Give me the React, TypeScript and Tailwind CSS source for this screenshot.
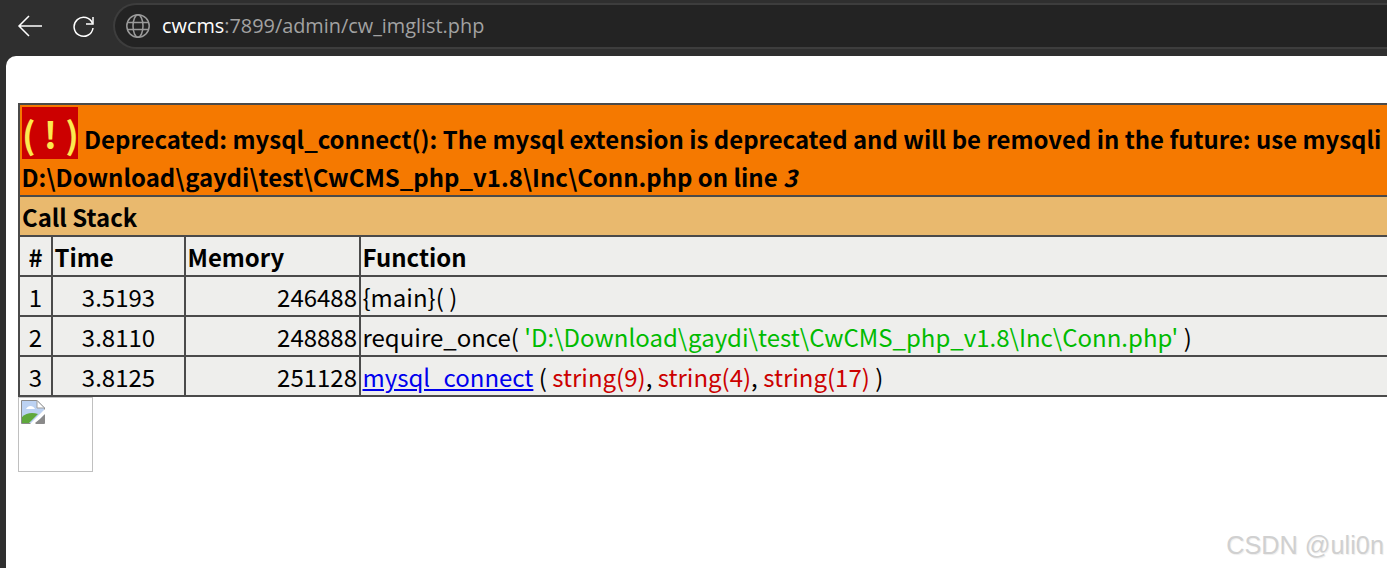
const bodyFont = "font-['Noto_Sans_CJK_SC','Noto_Sans',sans-serif]";

const cell = 'border-2 border-[#4a4a4a] bg-[#eeeeec] px-[2px] pt-[2px] h-[40px] leading-[36px] whitespace-nowrap';
const leftCell = 'border-2 border-[#4a4a4a] bg-[#eeeeec] pl-[1.5px] pr-[2px] pt-[2px] h-[40px] leading-[36px] whitespace-nowrap';

const BrokenImageIcon = () => (
  <svg width="24" height="24" viewBox="0 0 24 24" className="block">
    <path d="M0.5 0.5H16L23.5 8V23.5H0.5Z" fill="#bcd2f2" stroke="#8a8a8a" />
    <path d="M16 0.5V8H23.5Z" fill="#fff" stroke="#a0a0a0" />
    <path d="M5 9c2-4 7-4 9 0H5Z" fill="#fff" />
    <path d="M1 23v-6c4-4 10-5 16-3l-9 9Z" fill="#5fa83c" />
    <path d="M24 9L9 24h5l10-10Z" fill="#fff" />
    <path d="M19 19l4-4v8h-9Z" fill="#8a8a8a" />
  </svg>
);

const App = () => {
  return (
    <div className={`h-[568px] w-[1387px] overflow-hidden bg-[#2f2f2f] ${bodyFont}`}>
      {/* browser toolbar */}
      <div className="flex h-[56px] items-start pl-[17px] pt-[3px]">
        <svg width="26" height="26" viewBox="0 0 26 26" fill="none" stroke="#fff" strokeWidth="1.5" className="mt-[10px]">
          <path d="M25 13H2M12 3L2 13l10 10" />
        </svg>
        <svg width="24" height="24" viewBox="0 0 24 24" fill="none" stroke="#fff" strokeWidth="1.5" className="ml-[29px] mt-[11px]">
          <path d="M20.5 9.5A9.5 9.5 0 1 0 21 14" />
          <path d="M21 3v7h-7" />
        </svg>
        <div className="ml-[17px] flex h-[46px] flex-1 items-center rounded-l-[24px] border-2 border-r-0 border-[#3d3d3d] bg-[#232323] pl-[10px]">
          <svg width="26" height="26" viewBox="0 0 26 26" fill="none" stroke="#9a9a9a" strokeWidth="1.5">
            <circle cx="13" cy="13" r="11.2" />
            <ellipse cx="13" cy="13" rx="5" ry="11.2" />
            <path d="M2.5 9.5h21M2.5 16.5h21" />
          </svg>
          <span className="ml-[11px] font-['Open_Sans',sans-serif] text-[19.88px] text-[#a2a2a2]">
            <span className="text-white">cwcms</span>:7899/admin/cw_imglist.php
          </span>
        </div>
      </div>

      {/* page */}
      <div className="relative ml-[6px] h-[512px] rounded-tl-[10px] bg-white pl-[12px] pt-[47px] text-[24px] text-black">
        <table className="w-[1500px] table-fixed border-collapse">
          <colgroup>
            <col className="w-[33px]" />
            <col className="w-[133px]" />
            <col className="w-[175px]" />
            <col />
          </colgroup>
          <tbody>
            <tr>
              <th colSpan={4} className="h-[91px] border-2 border-[#4a4a4a] bg-[#f57900] pl-[1.5px] pr-[2px] pt-[2px] text-left align-top text-[23.93px] font-bold">
                <div className="flex h-[52px] whitespace-nowrap leading-[36px]">
                  <span className="ml-[0.5px] inline-block h-[52px] w-[56px] shrink-0 bg-[#cc0000] text-center text-[36px] font-bold leading-[52px] text-[#fce94f]">( ! )</span>
                  <span className="ml-[6px] mt-[14px]">Deprecated: mysql_connect(): The mysql extension is deprecated and will be removed in the future: use mysqli</span>
                </div>
                <div className="whitespace-nowrap leading-[36px]">
                  D:\Download\gaydi\test\CwCMS_php_v1.8\Inc\Conn.php on line <i>3</i>
                </div>
              </th>
            </tr>
            <tr>
              <th colSpan={4} className="h-[40px] border-2 border-[#4a4a4a] bg-[#e9b96e] px-[2px] pt-[2px] text-left text-[23.93px] font-bold leading-[36px]">Call Stack</th>
            </tr>
            <tr>
              <th className={`${cell} text-center text-[23.93px] font-bold`}>#</th>
              <th className={`${leftCell} text-left text-[23.93px] font-bold`}>Time</th>
              <th className={`${leftCell} text-left text-[23.93px] font-bold`}>Memory</th>
              <th className={`${leftCell} text-left text-[23.93px] font-bold`}>Function</th>
            </tr>
            <tr>
              <td className={`${cell} text-center`}>1</td>
              <td className={`${cell} text-center`}>3.5193</td>
              <td className={`${cell} text-right`}>246488</td>
              <td className={leftCell}>{'{main}( )'}</td>
            </tr>
            <tr>
              <td className={`${cell} text-center`}>2</td>
              <td className={`${cell} text-center`}>3.8110</td>
              <td className={`${cell} text-right`}>248888</td>
              <td className={leftCell}>
                require_once( <span className="text-[#00bb00]">'D:\Download\gaydi\test\CwCMS_php_v1.8\Inc\Conn.php'</span> )
              </td>
            </tr>
            <tr>
              <td className={`${cell} text-center`}>3</td>
              <td className={`${cell} text-center`}>3.8125</td>
              <td className={`${cell} text-right`}>251128</td>
              <td className={leftCell}>
                <a href="#" className="text-[#0000ee] underline">mysql_connect</a> ( <span className="text-[#cc0000]">string(9)</span>, <span className="text-[#cc0000]">string(4)</span>, <span className="text-[#cc0000]">string(17)</span> )
              </td>
            </tr>
          </tbody>
        </table>

        {/* broken image placeholder */}
        <div className="h-[75px] w-[75px] border border-[#c0c0c0] pl-[2px] pt-[2px]">
          <BrokenImageIcon />
        </div>

        {/* watermark */}
        <span className="absolute bottom-[10px] right-[3px] font-['Liberation_Sans',sans-serif] text-[25.3px] leading-none text-[#d0d0d0] [text-shadow:1px_1px_1px_#eeeeee]">CSDN @uli0n</span>
      </div>
    </div>
  );
};

export default App;
